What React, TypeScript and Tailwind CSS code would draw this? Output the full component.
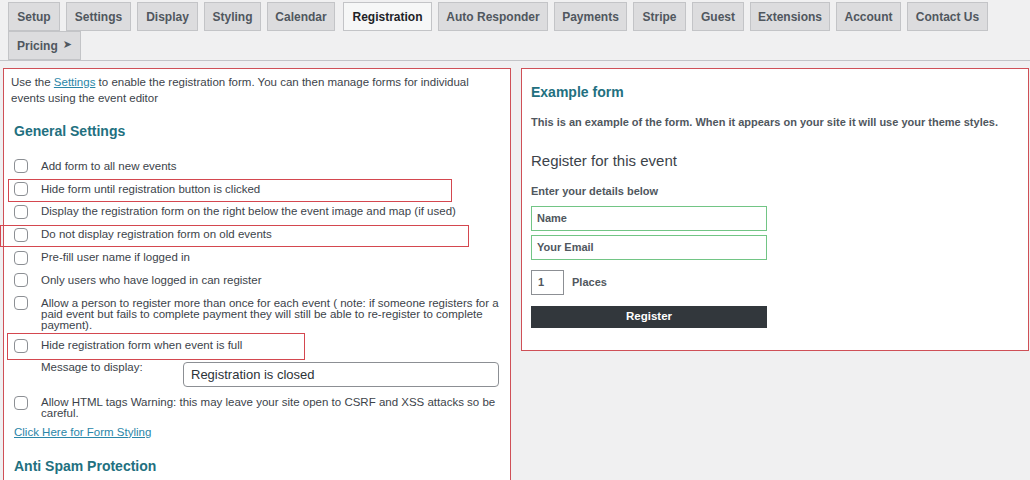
import React from "react";

const tabs = [
  { label: "Setup", w: "w-[52px]" },
  { label: "Settings", w: "w-[65px]" },
  { label: "Display", w: "w-[61px]" },
  { label: "Styling", w: "w-[57px]" },
  { label: "Calendar", w: "w-[68px]" },
  { label: "Registration", w: "w-[89px]", active: true },
  { label: "Auto Responder", w: "w-[110px]" },
  { label: "Payments", w: "w-[73px]" },
  { label: "Stripe", w: "w-[53px]" },
  { label: "Guest", w: "w-[52px]" },
  { label: "Extensions", w: "w-[80px]" },
  { label: "Account", w: "w-[65px]" },
  { label: "Contact Us", w: "w-[81px]" },
];

const Checkbox: React.FC = () => (
  <span className="my-[-1.5px] h-[14px] w-[14px] shrink-0 rounded-[4px] border border-[#8c8f94] bg-white" />
);

const Mark: React.FC<{ className: string }> = ({ className }) => (
  <span className={`pointer-events-none absolute border-[1.5px] border-[#d4474f] ${className}`} />
);

export default function App() {
  return (
    <div
      className="min-h-[480px] w-[1030px] overflow-hidden bg-[#f0f0f1] text-[#3c434a]"
      style={{ fontFamily: '"Liberation Sans", Arial, sans-serif' }}
    >
      {/* Tabs */}
      <div className="border-b border-[#c3c4c7] pt-[2px] pl-[8px]">
        <div className="flex gap-[6px]">
          {tabs.map((tab) => (
            <div
              key={tab.label}
              className={`flex h-[29px] items-center justify-center border border-[#c3c4c7] text-[12px] font-bold ${tab.w} ${
                tab.active ? "ml-[2px] bg-[#f6f7f7] text-[#1d2327]" : "bg-[#dcdcde] text-[#50575e]"
              }`}
            >
              {tab.label}
            </div>
          ))}
        </div>
        <div className="flex">
          <div className="flex h-[29px] w-[73px] items-center justify-center gap-[5px] border border-[#c3c4c7] bg-[#dcdcde] text-[12px] font-bold text-[#50575e]">
            Pricing
            <span className="text-[11px]" style={{ fontFamily: '"DejaVu Sans", sans-serif' }}>
              ➤
            </span>
          </div>
        </div>
      </div>

      {/* Panels */}
      <div className="mt-[7px] flex items-start gap-[10px] pl-[3px]">
        {/* Left panel */}
        <div className="h-[420px] w-[508px] border border-[#cf5057] bg-white px-[10px] pt-[5px] text-[11.5px]">
          <p className="-ml-[3px] leading-[16px]">
            Use the{" "}
            <a className="text-[#2a86a8] underline" href="#">
              Settings
            </a>{" "}
            to enable the registration form. You can then manage forms for individual
            <br />
            events using the event editor
          </p>

          <h2 className="mt-[15px] text-[14px] leading-[20px] font-bold text-[#22707f]">General Settings</h2>

          <div className="mt-[14px] flex flex-col">
            <div className="flex gap-[13px] py-[5.9px] leading-[11px]">
              <Checkbox />
              <span>Add form to all new events</span>
            </div>
            <div className="relative flex gap-[13px] py-[5.9px] leading-[11px]">
              <Checkbox />
              <span>Hide form until registration button is clicked</span>
              <Mark className="top-[1.5px] left-[-6px] h-[23px] w-[444px]" />
            </div>
            <div className="flex gap-[13px] py-[5.9px] leading-[11px]">
              <Checkbox />
              <span>Display the registration form on the right below the event image and map (if used)</span>
            </div>
            <div className="relative flex gap-[13px] py-[5.9px] leading-[11px]">
              <Checkbox />
              <span>Do not display registration form on old events</span>
              <Mark className="top-[1.5px] left-[-14px] h-[22px] w-[469px]" />
            </div>
            <div className="flex gap-[13px] py-[5.9px] leading-[11px]">
              <Checkbox />
              <span>Pre-fill user name if logged in</span>
            </div>
            <div className="flex gap-[13px] py-[5.9px] leading-[11px]">
              <Checkbox />
              <span>Only users who have logged in can register</span>
            </div>
            <div className="flex gap-[13px] pt-[5.9px] pb-[4px] leading-[11px]">
              <Checkbox />
              <span>
                Allow a person to register more than once for each event ( note: if someone registers for a paid
                event but fails to complete payment they will still be able to re-register to complete payment).
              </span>
            </div>
            <div className="relative flex gap-[13px] py-[5.9px] leading-[11px]">
              <Checkbox />
              <span>Hide registration form when event is full</span>
              <Mark className="top-[-1.5px] left-[-7px] h-[27px] w-[298px]" />
            </div>
            <div className="mt-[5px] flex items-start pl-[27px]">
              <span className="w-[142px] leading-[11px]">Message to display:</span>
              <div className="flex h-[25px] w-[316px] items-center rounded-[4px] border border-[#8c8f94] bg-white px-[7px] text-[13px] text-[#2c3338]">
                Registration is closed
              </div>
            </div>
            <div className="mt-[4px] flex gap-[13px] py-[5.9px] leading-[11px]">
              <Checkbox />
              <span>Allow HTML tags Warning: this may leave your site open to CSRF and XSS attacks so be careful.</span>
            </div>
          </div>

          <a className="mt-[-0.5px] block leading-[14px] text-[#2a86a8] underline" href="#">
            Click Here for Form Styling
          </a>

          <h2 className="mt-[17px] text-[14px] leading-[20px] font-bold text-[#22707f]">Anti Spam Protection</h2>
        </div>

        {/* Right panel */}
        <div className="w-[508px] border border-[#cf5057] bg-white pt-[13px] pb-[22px] pl-[9px]">
          <h2 className="text-[14px] leading-[20px] font-bold text-[#22707f]">Example form</h2>
          <p className="mt-[12px] text-[11px] leading-[16px] font-bold text-[#50575e]">
            This is an example of the form. When it appears on your site it will use your theme styles.
          </p>
          <h3 className="mt-[21px] text-[15px] leading-[20px] text-[#3c434a]">Register for this event</h3>
          <p className="mt-[12px] text-[11px] leading-[16px] font-bold text-[#50575e]">Enter your details below</p>
          <div className="mt-[7px] flex h-[25px] w-[236px] items-center border-[1.5px] border-[#72c585] px-[5px] text-[11px] font-bold text-[#50575e]">
            Name
          </div>
          <div className="mt-[4px] flex h-[25px] w-[236px] items-center border-[1.5px] border-[#72c585] px-[5px] text-[11px] font-bold text-[#50575e]">
            Your Email
          </div>
          <div className="mt-[10px] flex items-center gap-[8px]">
            <div className="flex h-[25px] w-[33px] items-center border border-[#8c8f94] px-[6px] text-[11px] font-bold text-[#50575e]">
              1
            </div>
            <span className="text-[11px] font-bold text-[#50575e]">Places</span>
          </div>
          <button className="mt-[11px] flex h-[22px] w-[236px] items-center justify-center bg-[#32373c] text-[11.5px] font-bold text-white">
            Register
          </button>
        </div>
      </div>
    </div>
  );
}
